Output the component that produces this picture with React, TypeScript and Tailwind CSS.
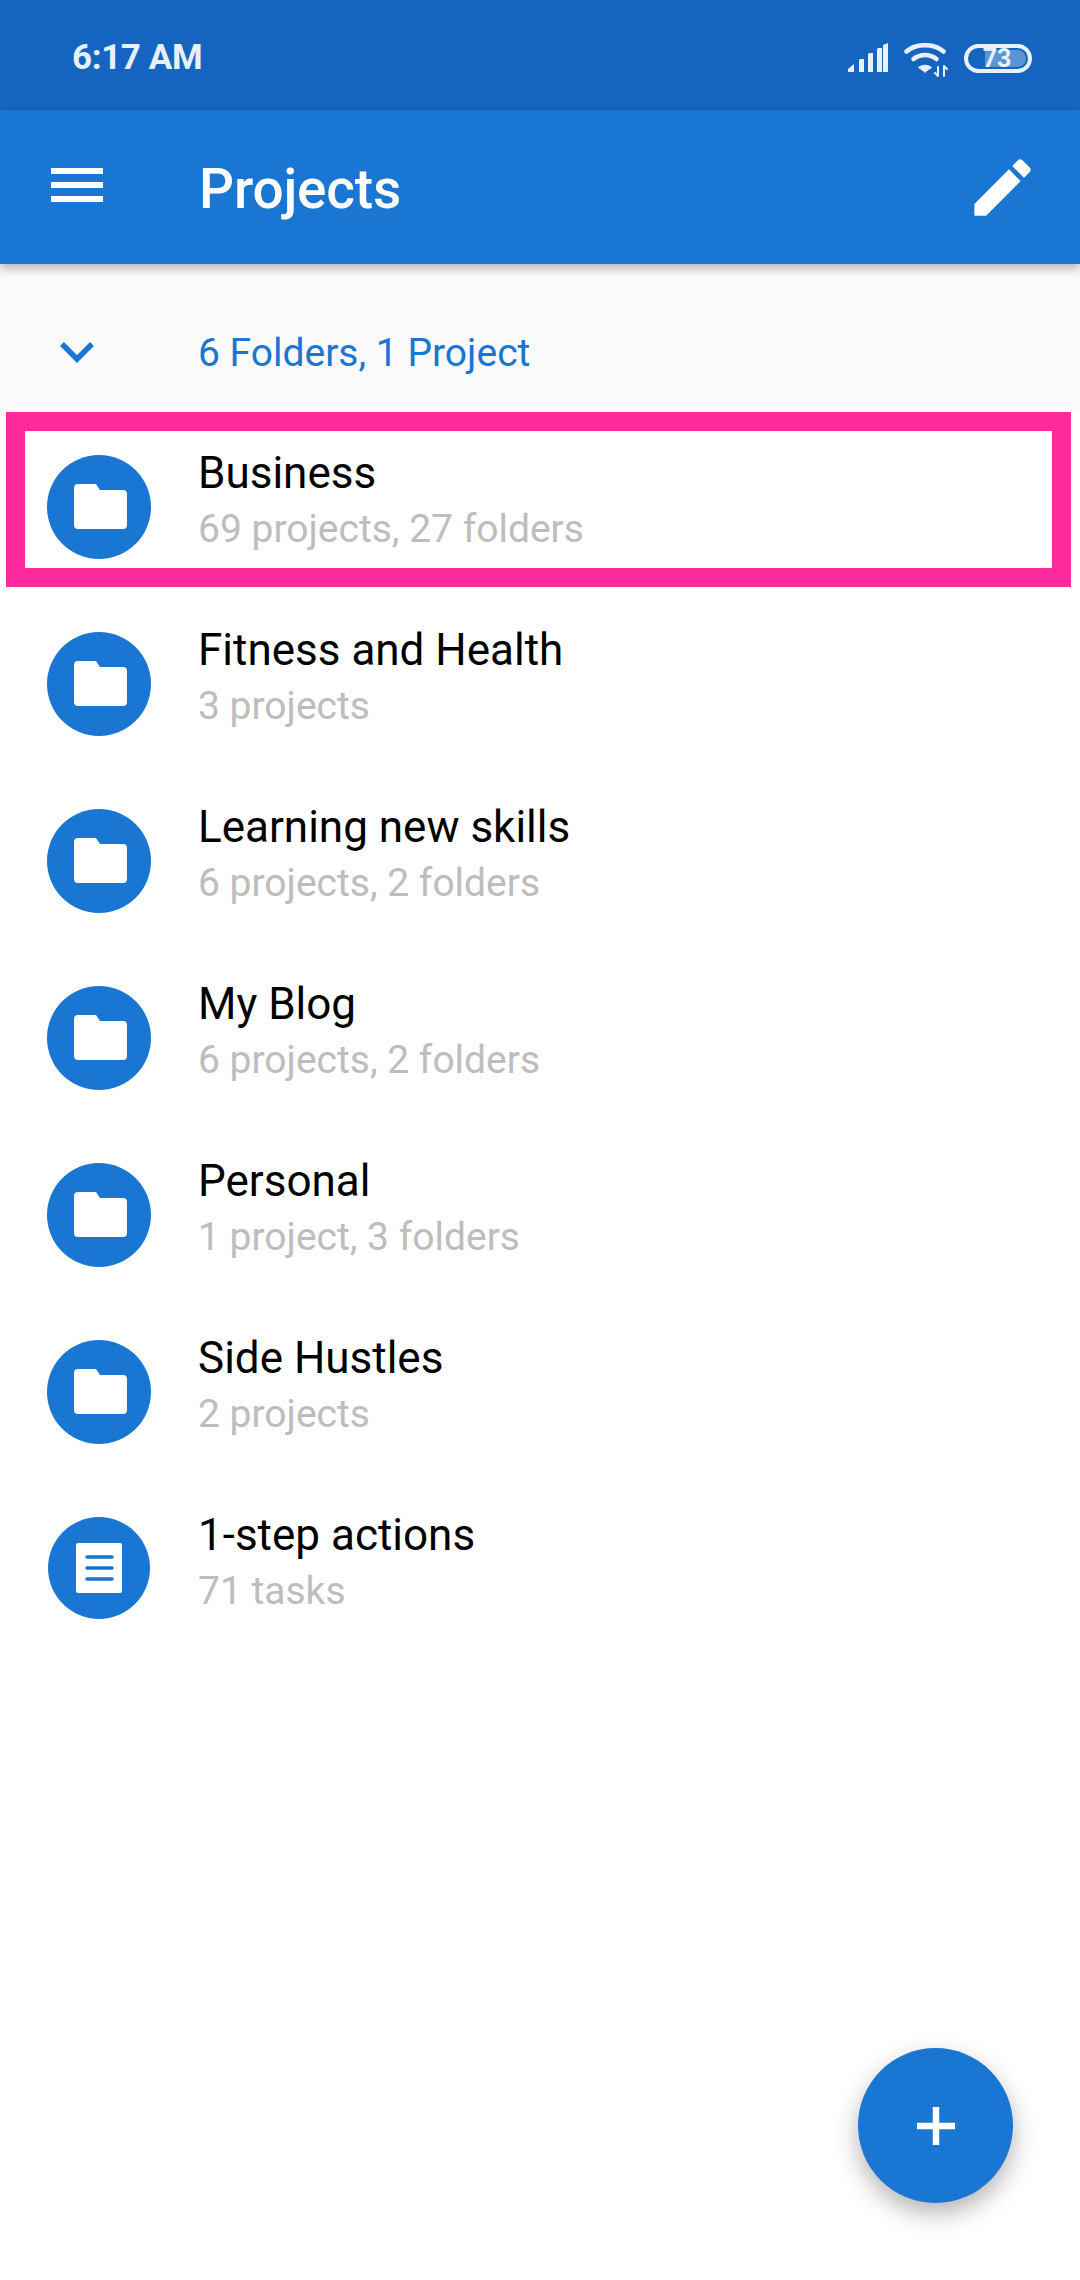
const rows = [
  { title: 'Business', sub: '69 projects, 27 folders', highlight: true },
  { title: 'Fitness and Health', sub: '3 projects' },
  { title: 'Learning new skills', sub: '6 projects, 2 folders' },
  { title: 'My Blog', sub: '6 projects, 2 folders' },
  { title: 'Personal', sub: '1 project, 3 folders' },
  { title: 'Side Hustles', sub: '2 projects' },
  { title: '1-step actions', sub: '71 tasks', doc: true },
]

function StatusIcons() {
  return (
    <div className="flex items-center">
      <svg width="40" height="30" viewBox="0 0 40 30" fill="#e6f1fb">
        <path d="M0 29v-3l6-5v8H0zM11 29V17l1-1h4v13h-5zM20 29V11l1-1h4v19h-5zM29 29V6l1-1h4v24h-5z" />
        <path d="M35 29V2l5-2v29h-5z" />
      </svg>
      <svg className="mt-[4px] ml-[16px]" width="44" height="34" viewBox="0 0 44 34" fill="none" stroke="#e6f1fb" strokeLinecap="round">
        <path d="M2.500 8.500C12 0 30 0 39.500 8.500" strokeWidth="4.500" />
        <path d="M9.500 16C16 10.500 26 10.500 32.500 16" strokeWidth="4.500" />
        <path d="M21 29l-6.500-4.500C18 21.500 24 21.500 27.500 24.500L21 29z" fill="#e6f1fb" strokeWidth="1" />
        <path d="M34 24v9M34 33l-3-3M40 23v10M40 23l3 3" strokeWidth="2" />
      </svg>
      <div className="relative ml-[16px] flex h-[29px] w-[68px] items-center justify-center rounded-full border-[4px] border-[#e6f1fb]">
        <div className="absolute top-[2px] right-[2px] bottom-[2px] left-[17px] rounded-r-full bg-white/30" />
        <span className="relative -ml-[2px] text-[25px] leading-none font-bold text-[#e6f1fb]">73</span>
      </div>
    </div>
  )
}

function FolderIcon() {
  return (
    <svg className="ml-[3px]" width="53" height="45" viewBox="0 0 53 45" fill="white">
      <path d="M4 0H22L26 6H49a4 4 0 0 1 4 4V41a4 4 0 0 1-4 4H4a4 4 0 0 1-4-4V4a4 4 0 0 1 4-4z" />
    </svg>
  )
}

function DocIcon() {
  return (
    <svg width="46" height="50" viewBox="0 0 46 50">
      <rect width="46" height="50" rx="2" fill="white" />
      <path d="M11 14h25M11 25h25M11 36h25" stroke="#1976d2" strokeWidth="3.500" strokeLinecap="round" />
    </svg>
  )
}

export default function App() {
  return (
    <div className="relative h-[2280px] w-[1080px] overflow-hidden bg-white font-['Roboto',sans-serif]">
      <div className="flex h-[110px] items-center justify-between bg-[#1565c0] pt-[6px] pr-[48px] pl-[72px]">
        <span className="text-[35px] font-bold tracking-[-0.4px] text-[#e6f1fb]">6:17 AM</span>
        <StatusIcons />
      </div>

      <header className="relative z-10 flex h-[154px] items-center bg-[#1976d2] shadow-[0_4px_10px_rgba(0,0,0,0.3)]">
        <div className="-mt-[4px] ml-[51px] flex w-[52px] flex-col gap-[8px]">
          <div className="h-[6px] bg-white" />
          <div className="h-[6px] bg-white" />
          <div className="h-[6px] bg-white" />
        </div>
        <h1 className="mt-[5px] ml-[96px] text-[55px] font-medium tracking-[-0.2px] text-white">Projects</h1>
        <svg className="mr-[40px] ml-auto" width="75" height="75" viewBox="0 0 24 24" fill="white">
          <path d="M3 17.250V21h3.750L17.810 9.940l-3.750-3.750L3 17.250zM20.710 7.040c.39-.39.39-1.020 0-1.410l-2.340-2.340c-.39-.39-1.020-.39-1.410 0l-1.830 1.830 3.750 3.750 1.830-1.830z" />
        </svg>
      </header>

      <div className="flex h-[148px] items-center bg-[#fafafa] pt-[30px]">
        <svg className="ml-[60px]" width="34" height="22" viewBox="0 0 34 22" fill="none" stroke="#1976d2" strokeWidth="5.500">
          <path d="M2 2l15 15L32 2" />
        </svg>
        <span className="ml-[104px] text-[39px] text-[#1976d2]">6 Folders, 1 Project</span>
      </div>

      <div className="pt-[6px]">
        {rows.map((row) => (
          <div key={row.title} className="relative flex h-[177px] items-center pl-[47px]">
            {row.highlight && (
              <div className="absolute top-[-6px] left-[6px] h-[175px] w-[1065px] border-[19px] border-[#ff2a9d]" />
            )}
            {row.doc ? (
              <div className="mx-[1px] -mt-[2px] flex h-[102px] w-[102px] items-center justify-center rounded-full bg-[#1976d2]">
                <DocIcon />
              </div>
            ) : (
              <div className="flex h-[104px] w-[104px] items-center justify-center rounded-full bg-[#1976d2]">
                <FolderIcon />
              </div>
            )}
            <div className="ml-[47px] pb-[12px]">
              <div className="text-[44px] leading-[58px] text-black">{row.title}</div>
              <div className="text-[39px] leading-[55px] text-[#bdbdbd]">{row.sub}</div>
            </div>
          </div>
        ))}
      </div>

      <button className="absolute right-[67px] bottom-[77px] flex h-[155px] w-[155px] items-center justify-center rounded-full bg-[#1976d2] shadow-[0_10px_24px_rgba(0,0,0,0.3)]">
        <svg width="38" height="38" viewBox="0 0 38 38" fill="white">
          <path d="M15.750 0h6.500v15.750H38v6.500H22.250V38h-6.500V22.250H0v-6.500h15.750z" />
        </svg>
      </button>
    </div>
  )
}
